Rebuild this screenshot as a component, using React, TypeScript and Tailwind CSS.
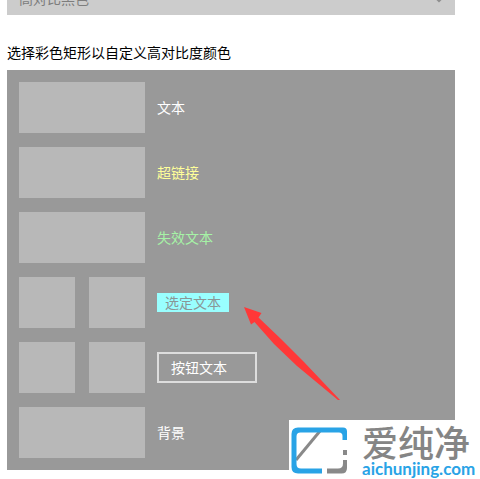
import React from "react";

type Row = { name: string; swatches: string[]; sample: React.ReactNode };

const rows: Row[] = [
  { name: "文本", swatches: ["文本"], sample: <span className="text-white">文本</span> },
  {
    name: "超链接",
    swatches: ["超链接"],
    sample: (
      <a href="#link" className="text-[#ffff99]">
        超链接
      </a>
    ),
  },
  { name: "失效文本", swatches: ["失效文本"], sample: <span className="text-[#a6f3a6]">失效文本</span> },
  {
    name: "选定文本",
    swatches: ["选定文本前景", "选定文本背景"],
    sample: <span className="bg-[#99ffff] px-2 text-[#8a9696]">选定文本</span>,
  },
  {
    name: "按钮文本",
    swatches: ["按钮文本前景", "按钮文本背景"],
    sample: (
      <button type="button" className="w-25 border-2 border-[#dddddd] px-3 py-1 text-left text-white">
        按钮文本
      </button>
    ),
  },
  { name: "背景", swatches: ["背景"], sample: <span className="text-white">背景</span> },
];

function ThemeSelect() {
  return (
    <div className="relative -mt-[17px]">
      <select
        aria-label="选择主题"
        className="block h-8 w-full appearance-none bg-[#cccccc] px-3 pb-0.5 text-sm text-[#7d7d7d]"
        defaultValue="black"
      >
        <option value="black">高对比黑色</option>
      </select>
      <svg
        className="pointer-events-none absolute right-2.5 bottom-3"
        width="12"
        height="8"
        viewBox="0 0 12 8"
        fill="none"
        stroke="#8f8f8f"
        strokeWidth="1.5"
      >
        <path d="M1 1.5 6 6.5 11 1.5" />
      </svg>
    </div>
  );
}

function Watermark() {
  return (
    <div className="absolute -right-[25px] -bottom-[9px] flex h-[59px] w-[191px] items-start gap-3.5 bg-white pt-[7px] pl-0.5">
      <svg className="shrink-0" width="57" height="47" viewBox="0 0 57 47" fill="none">
        <path d="M5 33 29 4" stroke="#898989" strokeWidth="3" />
        <path
          d="M56 13V4.5Q56 .5 52 .5H7Q.5 .5 .5 7v33q0 6.500 6.500 6.500H31v-5H10q-4.500 0-4.500-4.500V9.500Q5.500 5.500 9.500 5.500H48q3.500 0 3.500 3.500v4Z"
          fill="#29a3e6"
        />
        <path d="M52 23h4v5h-4ZM52 33h4v8q0 5.500-5.500 5.500H36v-5H47q5 0 5-5Z" fill="#898989" />
      </svg>
      <div className="flex flex-col whitespace-nowrap">
        <span className="text-4xl leading-7 font-medium text-[#858585]">爱纯净</span>
        <span className="pt-1.5 font-[Lato,sans-serif] text-[17px] leading-4 font-bold text-[#29a3e6]">
          aichunjing.com
        </span>
      </div>
    </div>
  );
}

export default function App() {
  return (
    <div className="overflow-hidden bg-white pr-[25px] pb-[9px] pl-[7px] font-['Noto_Sans_CJK_SC',sans-serif] text-sm leading-[19px] text-black">
      <ThemeSelect />
      <h2 className="mt-7 mb-2">选择彩色矩形以自定义高对比度颜色</h2>
      <main className="relative flex flex-col gap-3.5 bg-[#999999] p-3">
        {rows.map((row) => (
          <div key={row.name} className="flex items-center gap-3">
            <div className="flex h-[51px] w-[126px] gap-3.5">
              {row.swatches.map((label) => (
                <button key={label} type="button" aria-label={label} className="flex-1 bg-[#b8b8b8]" />
              ))}
            </div>
            {row.sample}
          </div>
        ))}
        <svg className="pointer-events-none absolute top-[236px] left-[236px]" width="98" height="96" viewBox="0 0 98 96">
          <path d="M1 1 18.500 7 15.500 11.500 38 33 61 56 97 94 95 94 54 60 31 38 11.500 16 8 18.500Z" fill="#ff3838" />
        </svg>
        <Watermark />
      </main>
    </div>
  );
}
